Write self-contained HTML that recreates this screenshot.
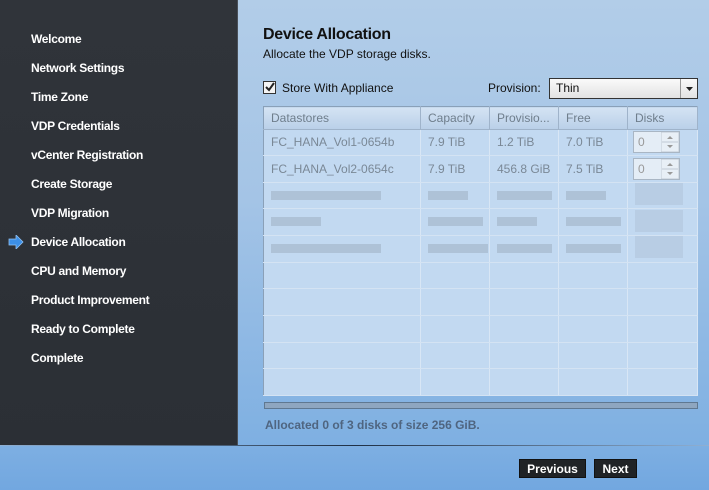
<!DOCTYPE html>
<html><head><style>
*{margin:0;padding:0;box-sizing:border-box}
body{width:709px;height:490px;overflow:hidden;font-family:"Liberation Sans",Arial,sans-serif;background:linear-gradient(#b2cde8,#a4c4e6 200px,#7fb0e2 440px,#72a7e0);position:relative}
#side{position:absolute;left:0;top:0;width:238px;height:446px;background:linear-gradient(#30343a,#2b2f35);border-right:1px solid #4a5058}
#side div{position:absolute;left:31px;color:#fff;font-size:12px;font-weight:bold;letter-spacing:-0.3px}
.abs{position:absolute}
h1{position:absolute;left:263px;top:26px;font-size:16px;font-weight:bold;color:#111;letter-spacing:-0.3px}
.sub{left:263px;top:47px;font-size:12px;color:#111}
table{position:absolute;left:263px;top:106px;width:435px;height:290px;border-collapse:collapse;border:1px solid #8aa0b8;background:#c2d9f1;font-size:12px;color:#7a8896;table-layout:fixed}
th{height:22px;text-align:left;font-weight:normal;padding-left:7px;background:linear-gradient(#d4e3f3,#b9cfe8);border-right:1px solid #9fb3ca;border-bottom:1px solid #9fb3ca;color:#6f7e8c}
td{height:26px;padding-left:7px;border-right:1px solid #d8e6f5;border-bottom:1px solid #d4e3f3;white-space:nowrap}
.spin{display:inline-block;width:47px;height:22px;border:1px solid #a9b6c4;background:#e4edf6;position:relative;padding-left:4px;line-height:20px;color:#999;vertical-align:middle}
.spin svg{position:absolute;right:0;top:0}
.blur{display:inline-block;height:9px;background:#a9bcd1;opacity:.8}
.btn{position:absolute;top:459px;height:19px;background:#202326;color:#fff;font-size:12px;font-weight:bold;text-align:center;line-height:19px;border:1px solid #111}
</style></head><body>
<div id="side">
<div style="top:32px">Welcome</div>
<div style="top:61px">Network Settings</div>
<div style="top:90px">Time Zone</div>
<div style="top:119px">VDP Credentials</div>
<div style="top:148px">vCenter Registration</div>
<div style="top:177px">Create Storage</div>
<div style="top:206px">VDP Migration</div>
<div style="top:235px">Device Allocation</div>
<div style="top:264px">CPU and Memory</div>
<div style="top:293px">Product Improvement</div>
<div style="top:322px">Ready to Complete</div>
<div style="top:351px">Complete</div>
<svg class="abs" style="left:8px;top:235px" width="16" height="14"><path d="M1 4h7V0l7 7-7 7V10H1z" fill="#3c8fe6" stroke="#8fc1f3" stroke-width=".8"/></svg>
</div>
<div class="abs" style="left:0;top:445px;width:709px;height:1px;background:linear-gradient(90deg,#8fb0d4,#1f3045 50%,#8fb0d4)"></div>
<h1>Device Allocation</h1>
<div class="abs sub">Allocate the VDP storage disks.</div>
<div class="abs" style="left:263px;top:81px;width:13px;height:13px;border:1px solid #333;background:#f4f4f4"><svg width="11" height="11" style="position:absolute;left:0;top:0"><path d="M2 5l3 3 5-7" stroke="#222" stroke-width="2" fill="none"/></svg></div>
<div class="abs" style="left:282px;top:81px;font-size:12px;color:#111">Store With Appliance</div>
<div class="abs" style="left:488px;top:81px;font-size:12px;color:#111">Provision:</div>
<div class="abs" style="left:549px;top:78px;width:149px;height:21px;border:1px solid #333;background:linear-gradient(#fafafa,#e2e2e2);font-size:12px;line-height:19px;padding-left:6px;color:#111">Thin<div style="position:absolute;right:0;top:0;width:17px;height:19px;border-left:1px solid #999"><svg width="17" height="19"><path d="M5 8h7l-3.5 4z" fill="#222"/></svg></div></div>
<table>
<colgroup><col style="width:157px"><col style="width:69px"><col style="width:69px"><col style="width:69px"><col></colgroup>
<tr><th>Datastores</th><th>Capacity</th><th>Provisio...</th><th>Free</th><th>Disks</th></tr>
<tr><td>FC_HANA_Vol1-0654b</td><td>7.9 TiB</td><td>1.2 TiB</td><td>7.0 TiB</td><td style="padding-left:5px"><span class="spin">0<svg width="18" height="20"><rect x="0" y="0" width="18" height="20" fill="#e8eff6" stroke="#c0cad4"/><line x1="1" y1="10" x2="17" y2="10" stroke="#c0cad4"/><path d="M6 7l3-3 3 3z M6 13l3 3 3-3z" fill="#999"/></svg></span></td></tr>
<tr><td>FC_HANA_Vol2-0654c</td><td>7.9 TiB</td><td>456.8 GiB</td><td>7.5 TiB</td><td style="padding-left:5px"><span class="spin">0<svg width="18" height="20"><rect x="0" y="0" width="18" height="20" fill="#e8eff6" stroke="#c0cad4"/><line x1="1" y1="10" x2="17" y2="10" stroke="#c0cad4"/><path d="M6 7l3-3 3 3z M6 13l3 3 3-3z" fill="#999"/></svg></span></td></tr>
<tr><td><span class="blur" style="width:110px"></span></td><td><span class="blur" style="width:40px"></span></td><td><span class="blur" style="width:55px"></span></td><td><span class="blur" style="width:40px"></span></td><td><span class="blur" style="width:48px;height:22px;opacity:.4"></span></td></tr>
<tr><td><span class="blur" style="width:50px"></span></td><td><span class="blur" style="width:55px"></span></td><td><span class="blur" style="width:40px"></span></td><td><span class="blur" style="width:55px"></span></td><td><span class="blur" style="width:48px;height:22px;opacity:.4"></span></td></tr>
<tr><td><span class="blur" style="width:110px"></span></td><td><span class="blur" style="width:60px"></span></td><td><span class="blur" style="width:55px"></span></td><td><span class="blur" style="width:55px"></span></td><td><span class="blur" style="width:48px;height:22px;opacity:.4"></span></td></tr>
<tr><td></td><td></td><td></td><td></td><td></td></tr>
<tr><td></td><td></td><td></td><td></td><td></td></tr>
<tr><td></td><td></td><td></td><td></td><td></td></tr>
<tr><td></td><td></td><td></td><td></td><td></td></tr>
<tr><td></td><td></td><td></td><td></td><td></td></tr>
</table>
<div class="abs" style="left:264px;top:402px;width:434px;height:7px;background:#8ea6c0;border:1px solid #5f7891"></div>
<div class="abs" style="left:265px;top:418px;font-size:12px;font-weight:bold;color:#4f6580">Allocated 0 of 3 disks of size 256 GiB.</div>
<div class="btn" style="left:519px;width:67px">Previous</div>
<div class="btn" style="left:594px;width:43px">Next</div>
</body></html>
